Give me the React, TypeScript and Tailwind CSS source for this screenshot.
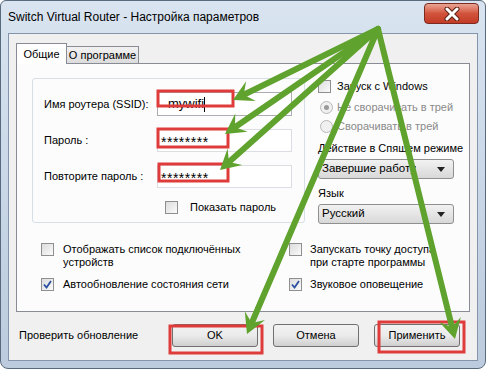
import React from "react";

const font = { fontFamily: '"Liberation Sans", Arial, sans-serif' };

function Check({ checked = false }: { checked?: boolean }) {
  return (
    <span className="w-[13px] h-[13px] shrink-0 border border-[#8f8f8f] bg-gradient-to-br from-[#dcdcdc] to-[#fbfbfb] flex items-center justify-center">
      {checked && (
        <svg width="9" height="9" viewBox="0 0 9 9">
          <path d="M1 4.5 L3.5 7.5 L8 1" fill="none" stroke="#2a4fa0" strokeWidth="1.8" />
        </svg>
      )}
    </span>
  );
}

function Radio({ checked = false }: { checked?: boolean }) {
  return (
    <span className="w-[13px] h-[13px] shrink-0 rounded-full border border-[#b8b8b8] bg-[#f0f0f0] flex items-center justify-center">
      {checked && <span className="w-[5px] h-[5px] rounded-full bg-[#9a9a9a]" />}
    </span>
  );
}

function Select({ value }: { value: string }) {
  return (
    <div className="w-[136px] h-[20px] rounded-[3px] border border-[#8e8f8f] bg-gradient-to-b from-[#f2f2f2] to-[#d8d8d8] flex items-center justify-between pl-[3px] pr-[8px] text-[11.5px] text-black">
      <span className="truncate">{value}</span>
      <svg width="8" height="5" viewBox="0 0 8 5" className="shrink-0">
        <path d="M0 0 H8 L4 5 Z" fill="#222" />
      </svg>
    </div>
  );
}

function Button({ label }: { label: string }) {
  return (
    <button className="w-[86px] h-[23px] rounded-[3px] border border-[#707070] bg-gradient-to-b from-[#f2f2f2] via-[#ebebeb] to-[#cfcfcf] text-[11px] text-black">
      {label}
    </button>
  );
}

type Pt = [number, number];

function Arrow({ from, to }: { from: Pt; to: Pt }) {
  const dx = from[0] - to[0];
  const dy = from[1] - to[1];
  const len = Math.hypot(dx, dy);
  const ux = dx / len;
  const uy = dy / len;
  const nx = -uy;
  const ny = ux;
  const L = 20;
  const W = 11;
  const N = 12;
  const p = (a: number, b: number) => `${to[0] + ux * a + nx * b},${to[1] + uy * a + ny * b}`;
  const head = [p(0, 0), p(L, W), p(N, 0), p(L, -W)].join(" ");
  return (
    <g>
      <line x1={from[0]} y1={from[1]} x2={to[0] + ux * N} y2={to[1] + uy * N} stroke="#5fa22d" strokeWidth="6" strokeLinecap="round" />
      <polygon points={head} fill="#5fa22d" />
    </g>
  );
}

export default function App() {
  const origin: Pt = [378, 29];
  return (
    <div className="relative w-[486px] h-[369px] overflow-hidden bg-white whitespace-nowrap" style={font}>
      <div className="w-full h-full flex flex-col rounded-t-[6px] rounded-b-[8px] border border-[#5a6a7e] bg-gradient-to-b from-[#d9e4f0] via-[#c9d7e7] to-[#bccbdd]">
        {/* title bar */}
        <div className="h-[32px] shrink-0 flex items-start justify-between pl-[7px] pr-[6px]">
          <span className="mt-[8px] text-[12px] text-black leading-[16px]">
            Switch Virtual Router - Настройка параметров
          </span>
          <div className="mt-[2px] w-[55px] h-[21px] rounded-[4px] border border-[#7a2a1e] bg-gradient-to-b from-[#e9a494] via-[#d2533c] to-[#c23b25] flex items-center justify-center">
            <svg width="16" height="14" viewBox="0 0 16 14">
              <path d="M3 2 L13 12 M13 2 L3 12" stroke="#5a2218" strokeWidth="5" strokeLinecap="round" />
              <path d="M3 2 L13 12 M13 2 L3 12" stroke="#ffffff" strokeWidth="3" strokeLinecap="round" />
            </svg>
          </div>
        </div>

        {/* client area */}
        <div className="mx-[7px] mb-[7px] flex-1 flex flex-col border border-[#8494aa] bg-[#f0f0f0] pt-[8px] px-[7px]">
          {/* tabs */}
          <div className="flex items-end h-[21px] text-[11px] text-black">
            <div className="relative z-10 h-[21px] w-[51px] -mb-px border border-b-0 border-[#898c95] bg-white flex items-center justify-center">
              Общие
            </div>
            <div className="h-[17px] w-[72px] border border-l-0 border-b-0 border-[#898c95] bg-gradient-to-b from-[#f2f2f2] to-[#dcdcdc] flex items-center justify-center">
              О программе
            </div>
          </div>

          {/* tab panel */}
          <div className="h-[249px] border border-[#898c95] bg-[#fcfcfc] pt-[14px] px-[15px] text-[11px] text-black">
            <div className="flex">
              {/* group box */}
              <div className="w-[276px] h-[145px] rounded-[3px] border border-[#d5dfe5] pt-[13px] pl-[11px] pr-[12px] flex flex-col">
                <div className="flex items-center h-[24px]">
                  <span className="w-[113px]">Имя роутера (SSID):</span>
                  <div className="flex-1 h-[24px] border border-[#abadb3] bg-white flex items-center pl-[10px] text-[13px]">
                    mywifi<span className="w-px h-[15px] bg-black" />
                  </div>
                </div>
                <div className="flex items-center h-[23px] mt-[13px]">
                  <span className="w-[113px]">Пароль :</span>
                  <div className="flex-1 h-[23px] border border-[#dbdde2] bg-white flex items-center pl-[3px] pt-[3px] text-[14px] tracking-[0.5px]">
                    ********
                  </div>
                </div>
                <div className="flex items-center h-[23px] mt-[13px]">
                  <span className="w-[113px]">Повторите пароль :</span>
                  <div className="flex-1 h-[23px] border border-[#dbdde2] bg-white flex items-center pl-[3px] pt-[3px] text-[14px] tracking-[0.5px]">
                    ********
                  </div>
                </div>
                <div className="flex items-center gap-[12px] mt-[11px] pl-[121px]">
                  <Check />
                  <span>Показать пароль</span>
                </div>
              </div>

              {/* right column */}
              <div className="ml-[13px] w-[136px] flex flex-col">
                <div className="flex items-center gap-[6px] h-[14px] mt-[1px]">
                  <Check />
                  <span>Запуск с Windows</span>
                </div>
                <div className="flex items-center gap-[4px] h-[14px] mt-[7px] pl-[2px] text-[#8a8a8a]">
                  <Radio checked />
                  <span>Не сворачивать в трей</span>
                </div>
                <div className="flex items-center gap-[4px] h-[14px] mt-[5px] pl-[2px] text-[#8a8a8a]">
                  <Radio />
                  <span>Сворачивать в трей</span>
                </div>
                <div className="h-[16px] mt-[7px] leading-[16px]">Действие в Спящем режиме</div>
                <div className="mt-[3px]">
                  <Select value="Завершие работу" />
                </div>
                <div className="h-[16px] mt-[6px] leading-[16px]">Язык</div>
                <div className="mt-[3px]">
                  <Select value="Русский" />
                </div>
              </div>
            </div>

            {/* bottom options */}
            <div className="grid grid-cols-[248px_1fr] gap-y-[9px] mt-[19px] pl-[9px] leading-[13px]">
              <div className="flex items-start gap-[9px]">
                <Check />
                <span>
                  Отображать список подключённых
                  <br />
                  устройств
                </span>
              </div>
              <div className="flex items-start gap-[8px]">
                <Check />
                <span>
                  Запускать точку доступа
                  <br />
                  при старте программы
                </span>
              </div>
              <div className="flex items-center gap-[9px]">
                <Check checked />
                <span>Автообновление состояния сети</span>
              </div>
              <div className="flex items-center gap-[8px]">
                <Check checked />
                <span>Звуковое оповещение</span>
              </div>
            </div>
          </div>

          {/* footer */}
          <div className="flex-1 flex items-center text-[11px] text-black pt-[1px] pb-[2px]">
            <span className="ml-[3px] w-[153px]">Проверить обновление</span>
            <div className="flex gap-[15px]">
              <Button label="OK" />
              <Button label="Отмена" />
              <Button label="Применить" />
            </div>
          </div>
        </div>
      </div>

      {/* annotations */}
      <svg className="absolute inset-0 pointer-events-none" width="486" height="369" viewBox="0 0 486 369">
        <g fill="none" stroke="#df3b3b" strokeWidth="3">
          <rect x="158" y="91" width="75" height="15" />
          <rect x="158" y="129" width="70" height="18" />
          <rect x="159" y="164" width="69" height="17" />
          <rect x="170" y="326" width="92" height="27" />
          <rect x="379" y="322" width="85" height="30" />
        </g>
        <Arrow from={origin} to={[233, 100]} />
        <Arrow from={origin} to={[225, 134]} />
        <Arrow from={origin} to={[220, 170]} />
        <Arrow from={origin} to={[247, 334]} />
        <Arrow from={origin} to={[455, 339]} />
      </svg>
    </div>
  );
}
